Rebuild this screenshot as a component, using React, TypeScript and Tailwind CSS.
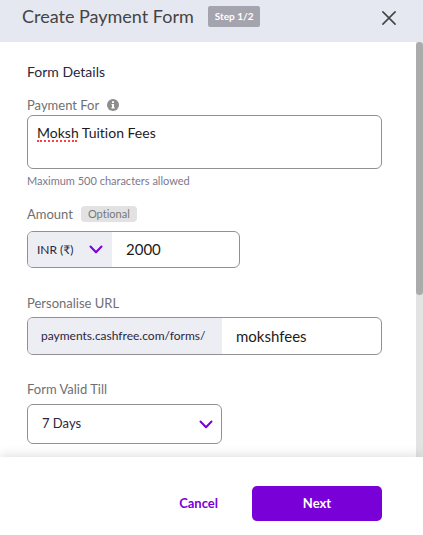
import React, { ReactNode } from 'react'

interface LabelProps {
  htmlFor: string
  children: ReactNode
}

function FieldLabel({ htmlFor, children }: LabelProps) {
  return (
    <label htmlFor={htmlFor} className="text-[13px] leading-4 text-[#6f6f73]">
      {children}
    </label>
  )
}

function ChevronIcon() {
  return (
    <svg
      viewBox="0 0 14 9"
      className="pointer-events-none absolute inset-y-0 right-[9px] my-auto h-[9px] w-[14px]"
      fill="none"
      stroke="#7a00d8"
      strokeWidth="2"
      strokeLinecap="round"
      strokeLinejoin="round"
      aria-hidden="true"
    >
      <path d="M1.5 1.5 7 7.2l5.5-5.7" />
    </svg>
  )
}

function InfoIcon() {
  return (
    <svg viewBox="0 0 12 12" className="h-3 w-3" aria-hidden="true">
      <circle cx="6" cy="6" r="6" fill="#8d8d8d" />
      <path d="M5 2.2h2v1.7H5zM4.5 4.9H7v3.4h.7v1.2H4.4V8.3H5V6.1h-.5z" fill="#fff" />
    </svg>
  )
}

function CloseIcon() {
  return (
    <svg
      viewBox="0 0 14 14"
      className="h-[14px] w-[14px]"
      fill="none"
      stroke="#444"
      strokeWidth="1.6"
      strokeLinecap="round"
      aria-hidden="true"
    >
      <path d="M.9.9l12.2 12.2M13.1.9.9 13.1" />
    </svg>
  )
}

export default function App() {
  return (
    <div className="flex min-h-screen flex-col bg-white font-['Lato','Noto_Sans',sans-serif] text-[#2b2640] [font-variant-ligatures:none]">
      {/* Header */}
      <header className="flex h-[42px] items-start justify-between bg-[#e5e8f0] pr-[27px] pl-[22px]">
        <div className="flex items-start gap-[14px] pt-[6px]">
          <h1 className="text-[18px] leading-5 text-[#444]">Create Payment Form</h1>
          <span className="rounded-xs bg-[#a4a4ae] px-[7px] text-[10px] leading-[21px] font-bold text-white">
            Step 1/2
          </span>
        </div>
        <button type="button" aria-label="Close" className="pt-[11px]">
          <CloseIcon />
        </button>
      </header>

      {/* Form body */}
      <div className="flex">
        <form id="payment-form" className="flex min-w-0 flex-1 flex-col pt-5 pr-[34px] pb-[13px] pl-[27px]">
          <h2 className="text-[14px] leading-5">Form Details</h2>

          <div className="mt-[15px] flex items-center gap-2">
            <FieldLabel htmlFor="payment-for">Payment For</FieldLabel>
            <InfoIcon />
          </div>
          <div className="relative mt-[2px] flex">
            <textarea
              id="payment-for"
              defaultValue="Moksh Tuition Fees"
              spellCheck={false}
              className="h-[54px] w-full resize-none rounded-md border border-[#919191] bg-white px-[9px] py-[7px] text-[14px] leading-5 text-[#1c1c1c] outline-none"
            />
            {/* Spelling mark under the first word */}
            <span className="pointer-events-none absolute top-[25px] left-[10px] w-10 border-b-2 border-dotted border-[#ff4040]" />
          </div>
          <p className="mt-1 text-[11px] leading-4 text-[#7d778c]">Maximum 500 characters allowed</p>

          <div className="mt-[17px] flex items-center gap-2">
            <FieldLabel htmlFor="amount">Amount</FieldLabel>
            <span className="rounded-sm bg-[#e2e2e2] px-[7px] text-[11px] leading-4 text-[#77777b]">Optional</span>
          </div>
          <div className="mt-[9px] flex h-[37px] w-[213px] overflow-hidden rounded-md border border-[#919191]">
            <div className="relative w-[84px] bg-[#edeef3]">
              <select
                aria-label="Currency"
                className="h-full w-full appearance-none pl-[9px] text-[12px] outline-none"
              >
                <option>INR (₹)</option>
              </select>
              <ChevronIcon />
            </div>
            <input
              id="amount"
              type="text"
              defaultValue="2000"
              className="min-w-0 flex-1 px-[14px] text-[15px] text-[#1c1c1c] outline-none"
            />
          </div>

          <div className="mt-[27px] flex">
            <FieldLabel htmlFor="url">Personalise URL</FieldLabel>
          </div>
          <div className="mt-[6px] flex h-[38px] overflow-hidden rounded-md border border-[#919191]">
            <span className="flex w-[194px] items-center bg-[#edeef3] pl-[13px] text-[12px]">
              payments.cashfree.com/forms/
            </span>
            <input
              id="url"
              type="text"
              defaultValue="mokshfees"
              spellCheck={false}
              className="min-w-0 flex-1 px-[14px] text-[15px] text-[#1c1c1c] outline-none"
            />
          </div>

          <div className="mt-[26px] flex">
            <FieldLabel htmlFor="validity">Form Valid Till</FieldLabel>
          </div>
          <div className="relative mt-[7px] h-10 w-[195px]">
            <select
              id="validity"
              className="h-full w-full appearance-none rounded-md border border-[#919191] bg-white pl-[14px] text-[13px] outline-none"
            >
              <option>7 Days</option>
            </select>
            <ChevronIcon />
          </div>
        </form>

        {/* Scrollbar */}
        <div className="w-[7px] bg-[#e3e3e3]">
          <div className="h-[61%] rounded-full bg-[#ababab]" />
        </div>
      </div>

      {/* Footer */}
      <footer className="relative flex flex-1 items-start justify-end gap-[34px] bg-white pt-[29px] pr-[41px] pb-[14px] shadow-[0_-2px_10px_rgba(0,0,0,0.12)]">
        <button type="button" className="h-[35px] text-[13px] font-bold text-[#7a00d8]">
          Cancel
        </button>
        <button
          type="submit"
          form="payment-form"
          className="h-[35px] w-[130px] rounded-[5px] bg-[#7a00d8] text-[13px] font-bold text-white"
        >
          Next
        </button>
      </footer>
    </div>
  )
}
